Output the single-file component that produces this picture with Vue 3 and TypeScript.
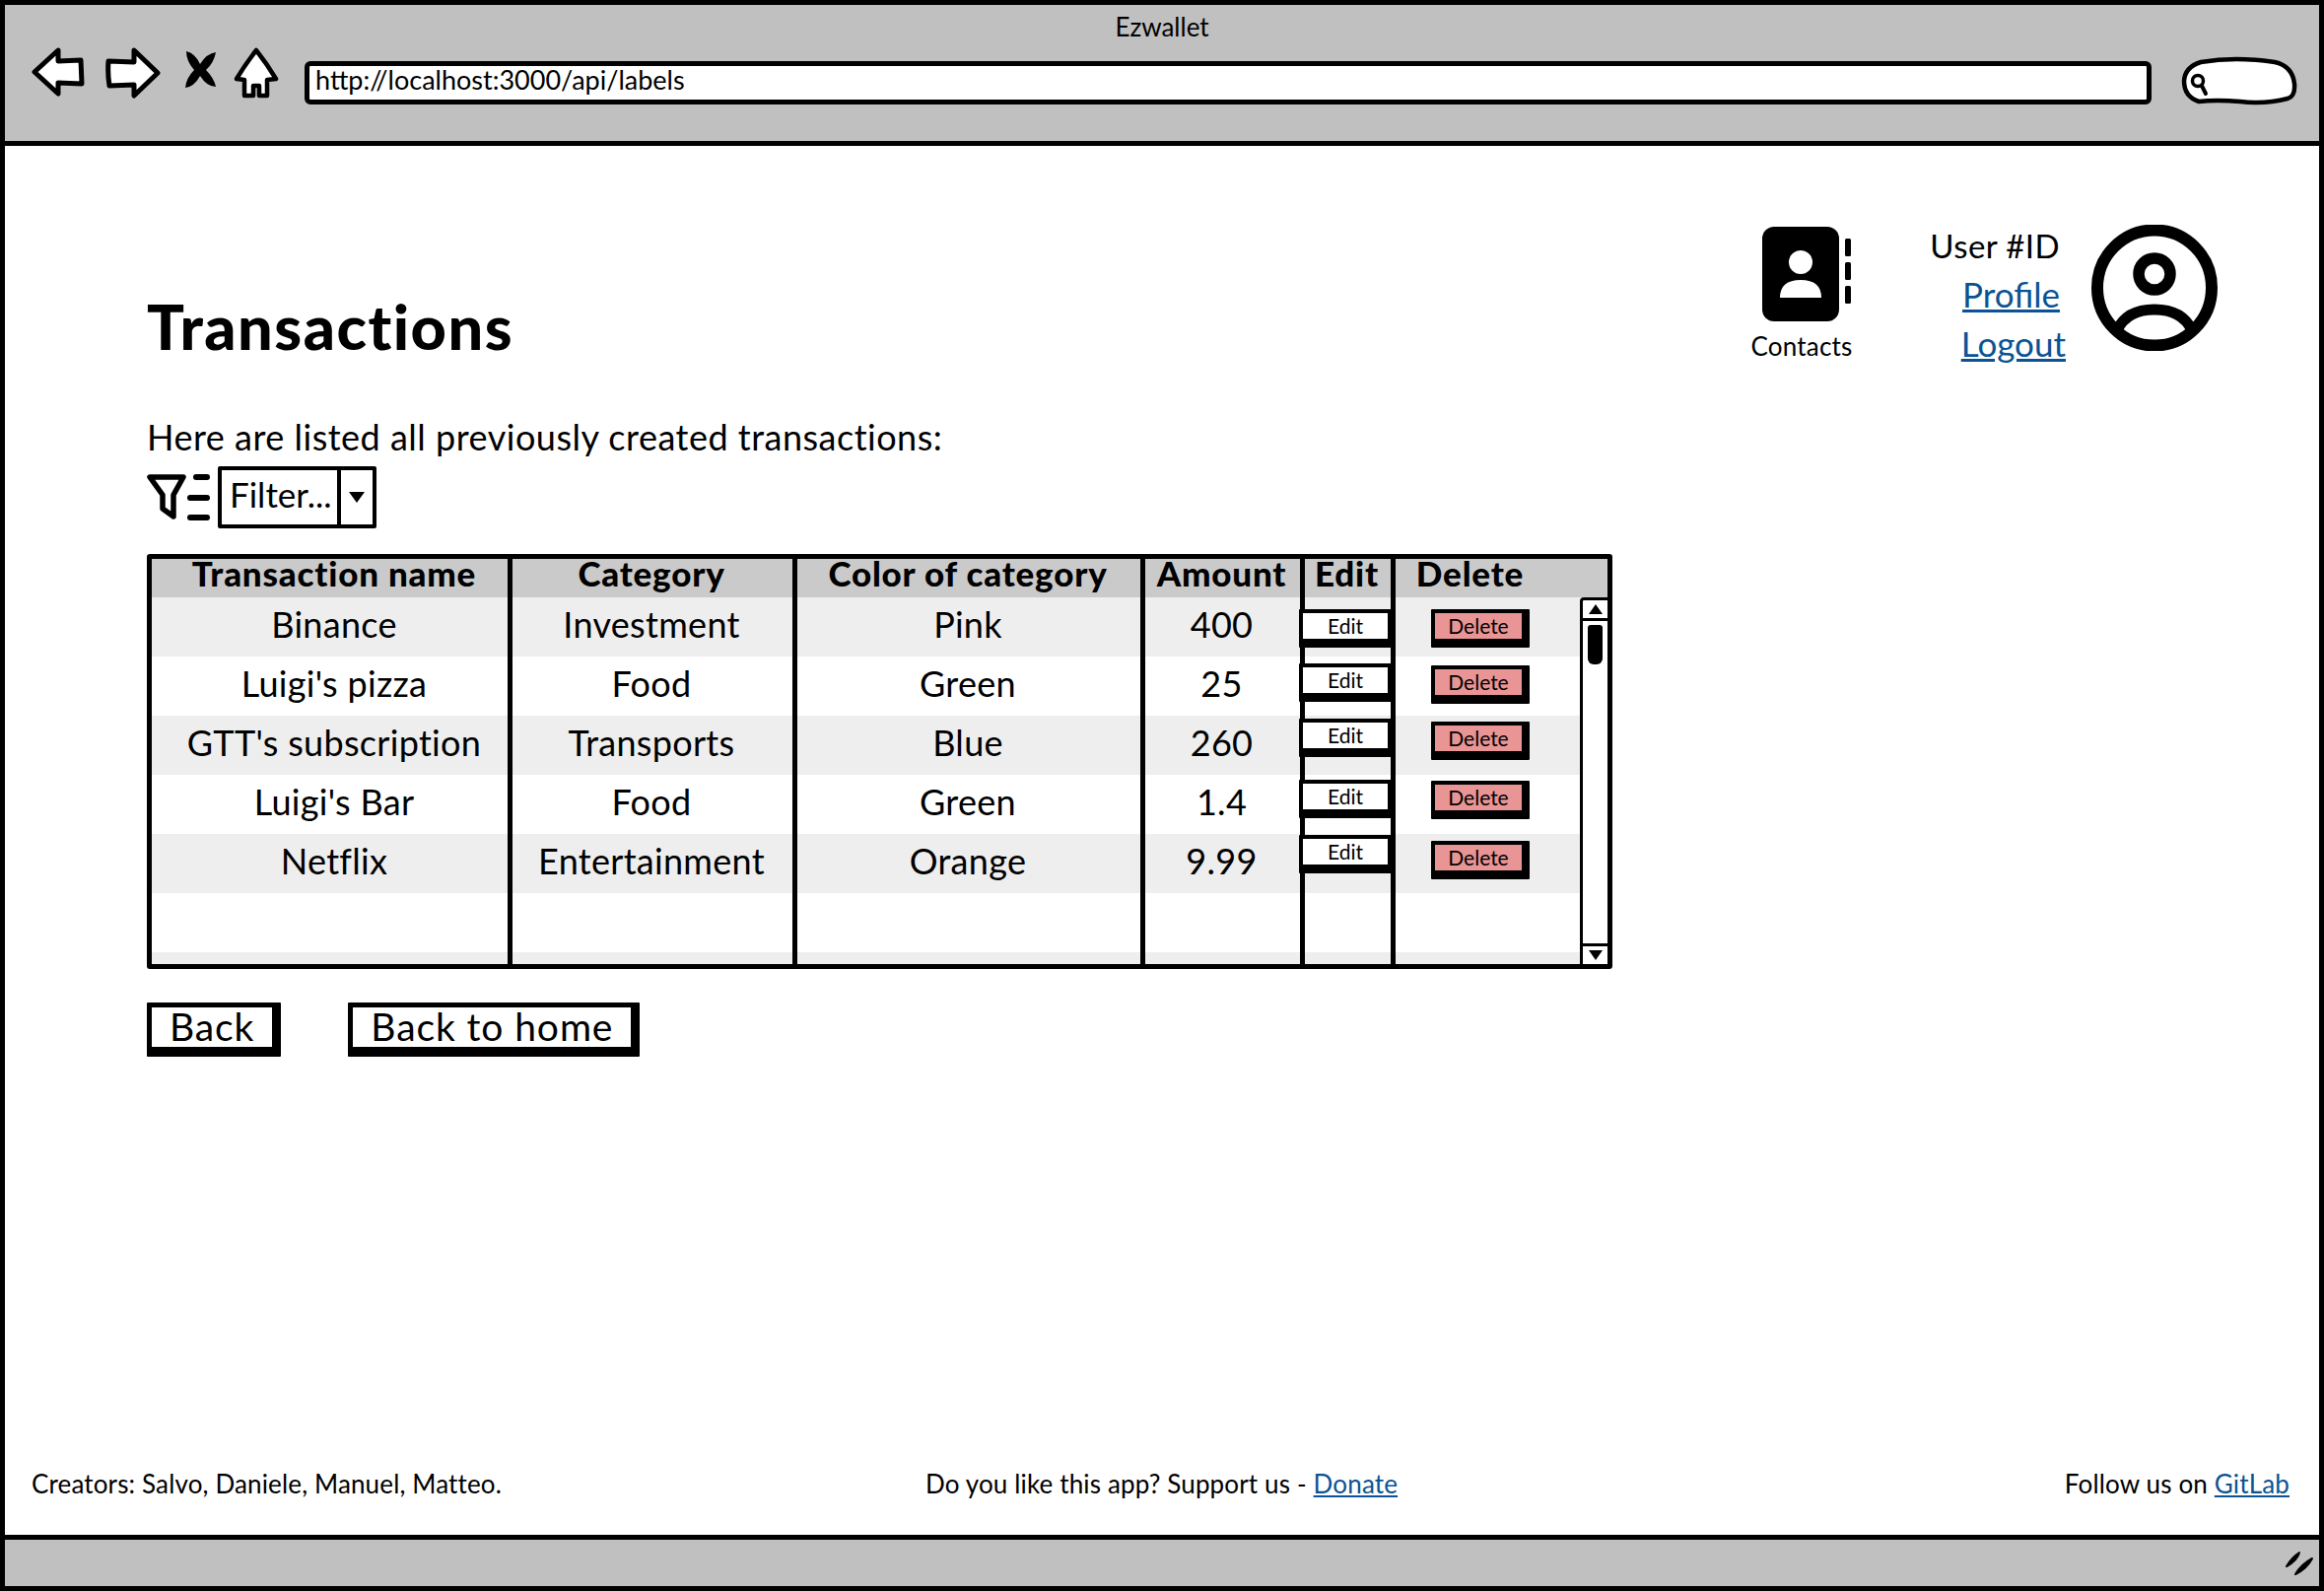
<template>
  <div class="window">
    <header class="topbar">
      <div class="window-title">Ezwallet</div>
      <div class="nav-row">
        <svg class="nav-icon back-icon" viewBox="0 0 55 50" width="55" height="50">
          <path d="M27 3 L3 25 L27 47 L27 36 L51 37 L50 13 L27 14 Z" fill="#fff" stroke="#000" stroke-width="5" stroke-linejoin="round" />
        </svg>
        <svg class="nav-icon forward-icon" viewBox="0 0 57 52" width="57" height="52">
          <path d="M30 3 L54 26 L30 49 L30 38 L5 39 Q3 26 4 14 L30 15 Z" fill="#fff" stroke="#000" stroke-width="5" stroke-linejoin="round" />
        </svg>
        <svg class="nav-icon stop-icon" viewBox="0 0 34 37" width="34" height="37">
          <path d="M3 0 Q12 2 17 13 Q24 2 33 1 Q31 12 23 19 Q31 27 33 36 Q24 36 17 25 Q11 36 2 37 Q3 27 11 19 Q3 10 3 0 Z" fill="#000" />
        </svg>
        <svg class="nav-icon home-icon" viewBox="0 0 46 52" width="46" height="52">
          <path d="M23 3 Q34 17 43 32 L34 33 L34 49 L26 49 L26 39 L20 39 L20 49 L11 49 L11 33 L3 32 Q12 17 23 3 Z" fill="#fff" stroke="#000" stroke-width="4.5" stroke-linejoin="round" />
        </svg>
        <div class="address-bar">http://localhost:3000/api/labels</div>
        <svg class="search-box" viewBox="0 0 119 50" width="119" height="50">
          <path d="M18 46 Q3 41 3 25 Q4 11 20 6 Q55 0 95 6 Q113 10 115 28 Q116 41 108 43 Q85 49 60 46 Q35 44 18 46 Z" fill="#fff" stroke="#000" stroke-width="4.5" />
          <circle cx="17" cy="25" r="5.5" fill="none" stroke="#000" stroke-width="3.5" />
          <path d="M21 30 L25 38" stroke="#000" stroke-width="4" stroke-linecap="round" />
        </svg>
      </div>
    </header>

    <main class="content">
      <div class="page-head">
        <h1 class="page-title">Transactions</h1>
        <div class="user-area">
          <div class="contacts">
            <svg viewBox="0 0 90 96" width="90" height="96">
              <rect x="0" y="0" width="78" height="96" rx="12" fill="#000" />
              <rect x="84" y="12" width="6" height="18" rx="1.5" fill="#000" />
              <rect x="84" y="36" width="6" height="18" rx="1.5" fill="#000" />
              <rect x="84" y="60" width="6" height="18" rx="1.5" fill="#000" />
              <ellipse cx="39" cy="36" rx="12" ry="12" fill="#fff" />
              <path d="M18 72 Q18 54 39 54 Q60 54 60 72 Z" fill="#fff" />
            </svg>
            <span class="contacts-label">Contacts</span>
          </div>
          <div class="user-links">
            <span class="user-id">User #ID</span>
            <a class="link user-link profile-link" href="#">Profile</a>
            <a class="link user-link" href="#">Logout</a>
          </div>
          <svg class="avatar" viewBox="0 0 128 128" width="128" height="128">
            <ellipse cx="64" cy="64" rx="58" ry="58.5" fill="#fff" stroke="#000" stroke-width="12" />
            <ellipse cx="64" cy="50" rx="16" ry="16" fill="none" stroke="#000" stroke-width="11.5" />
            <path d="M26 107 Q36 86 64 86 Q92 86 102 107" fill="none" stroke="#000" stroke-width="11" />
          </svg>
        </div>
      </div>

      <p class="intro">Here are listed all previously created transactions:</p>

      <div class="filter-row">
        <svg class="filter-icon" viewBox="0 0 65 48" width="65" height="48">
          <path d="M3 4 L37 4 L27 22 L27 44 L16 36 L16 22 Z" fill="#fff" stroke="#000" stroke-width="5.5" stroke-linejoin="round" />
          <path d="M50 4 L61 4 M44 25 L61 25 M44 45 L61 45" stroke="#000" stroke-width="6" stroke-linecap="round" />
        </svg>
        <div class="filter-select">
          <span class="filter-text">Filter...</span>
          <span class="filter-caret"><i class="caret"></i></span>
        </div>
      </div>

      <div class="grid-table">
        <div class="cell head" v-for="col in columns" :key="col">{{ col }}</div>
        <template v-for="(row, i) in rows" :key="row.name">
          <div class="cell" :class="{ shaded: i % 2 === 0 }">{{ row.name }}</div>
          <div class="cell" :class="{ shaded: i % 2 === 0 }">{{ row.category }}</div>
          <div class="cell" :class="{ shaded: i % 2 === 0 }">{{ row.color }}</div>
          <div class="cell" :class="{ shaded: i % 2 === 0 }">{{ row.amount }}</div>
          <div class="cell action" :class="{ shaded: i % 2 === 0 }">
            <button class="mini-btn edit-btn" :style="{ marginTop: row.editTop + 'px' }">Edit</button>
          </div>
          <div class="cell action last" :class="{ shaded: i % 2 === 0 }">
            <button class="mini-btn delete-btn" :style="{ marginTop: row.deleteTop + 'px' }">Delete</button>
          </div>
        </template>
        <div class="cell" v-for="n in 6" :key="'blank' + n"></div>
        <div class="cell shaded" v-for="n in 6" :key="'rest' + n"></div>

        <div class="scrollbar">
          <span class="scroll-btn"><i class="arrow up"></i></span>
          <span class="scroll-track"><i class="scroll-thumb"></i></span>
          <span class="scroll-btn down"><i class="arrow dn"></i></span>
        </div>
      </div>

      <div class="actions">
        <button class="big-btn">Back</button>
        <button class="big-btn">Back to home</button>
      </div>

      <footer class="page-foot">
        <span class="foot-left">Creators: Salvo, Daniele, Manuel, Matteo.</span>
        <span class="foot-center">Do you like this app? Support us - <a class="link" href="#">Donate</a></span>
        <span class="foot-right">Follow us on <a class="link" href="#">GitLab</a></span>
      </footer>
    </main>

    <div class="statusbar">
      <svg viewBox="0 0 30 26" width="30" height="26">
        <path d="M3 16 Q8 7 16 2 Q14 10 3 16 Z M12 24 Q18 14 29 8 Q24 18 12 24 Z" fill="#000" stroke="#000" stroke-width="2" stroke-linejoin="round" />
      </svg>
    </div>
  </div>
</template>

<script setup lang="ts">
interface Row {
  name: string;
  category: string;
  color: string;
  amount: string;
  editTop: number;
  deleteTop: number;
}

const columns = ["Transaction name", "Category", "Color of category", "Amount", "Edit", "Delete"];

// the buttons are not quite in line in the mockup, so each row keeps its own offset
const rows: Row[] = [
  { name: "Binance", category: "Investment", color: "Pink", amount: "400", editTop: 12, deleteTop: 12 },
  { name: "Luigi's pizza", category: "Food", color: "Green", amount: "25", editTop: 7, deleteTop: 9 },
  { name: "GTT's subscription", category: "Transports", color: "Blue", amount: "260", editTop: 3, deleteTop: 6 },
  { name: "Luigi's Bar", category: "Food", color: "Green", amount: "1.4", editTop: 5, deleteTop: 6 },
  { name: "Netflix", category: "Entertainment", color: "Orange", amount: "9.99", editTop: 1, deleteTop: 7 },
];
</script>

<style>
html,
body {
  margin: 0;
  background: #fff;
}
</style>

<style scoped>
.window {
  width: 2358px;
  height: 1614px;
  box-sizing: border-box;
  border: 5px solid #000;
  display: flex;
  flex-direction: column;
  overflow: hidden;
  font-family: Lato, "Open Sans", sans-serif;
  color: #000;
  background: #fff;
}

/* browser chrome */
.topbar {
  height: 143px;
  flex: none;
  box-sizing: border-box;
  background: #c0c0c0;
  border-bottom: 5px solid #000;
}
.window-title {
  text-align: center;
  font-size: 26px;
  line-height: 30px;
  padding-top: 7px;
}
.nav-row {
  display: flex;
  align-items: flex-start;
  margin-top: 6px;
  padding-left: 27px;
}
.back-icon {
  margin-right: 19px;
}
.forward-icon {
  margin-right: 23px;
}
.stop-icon {
  margin-top: 4px;
  margin-right: 17px;
}
.home-icon {
  margin-right: 26px;
}
.address-bar {
  width: 1874px;
  height: 44px;
  margin-top: 14px;
  box-sizing: border-box;
  background: #fff;
  border: 5px solid #000;
  border-radius: 6px;
  font-size: 27px;
  line-height: 27px;
  padding-left: 6px;
}
.search-box {
  margin-left: 30px;
  margin-top: 9px;
}

/* page */
.content {
  flex: 1;
  display: flex;
  flex-direction: column;
  padding-left: 144px;
  min-height: 0;
}
.page-head {
  height: 275px;
  flex: none;
  display: flex;
  justify-content: space-between;
  align-items: flex-start;
}
.page-title {
  margin: 147px 0 0;
  font-size: 63px;
  line-height: 72px;
  font-weight: 900;
  letter-spacing: 1.5px;
}
.user-area {
  display: flex;
  align-items: flex-start;
  margin-top: 80px;
  margin-right: 103px;
}
.contacts {
  width: 110px;
  display: flex;
  flex-direction: column;
  align-items: center;
  padding-top: 2px;
  margin-right: 68px;
}
.contacts-label {
  font-size: 26px;
  line-height: 30px;
  letter-spacing: 0.2px;
  margin-top: 10px;
  margin-left: -10px;
  white-space: nowrap;
}
.user-links {
  display: flex;
  flex-direction: column;
  align-items: flex-end;
  width: 140px;
  margin-right: 26px;
  padding-top: 1px;
}
.user-id {
  font-size: 33px;
  line-height: 40px;
  letter-spacing: 0.4px;
  margin-right: 6px;
}
.user-link {
  font-size: 35px;
  line-height: 50px;
}
.profile-link {
  margin-right: 6px;
  margin-top: 4px;
}
.link {
  color: #0b5394;
  text-decoration: underline;
}
.avatar {
  flex: none;
}
.intro {
  margin: 0;
  font-size: 36px;
  line-height: 40px;
  letter-spacing: 0.5px;
}
.filter-row {
  display: flex;
  align-items: flex-start;
  margin-top: 10px;
}
.filter-icon {
  margin-top: 7px;
  margin-right: 7px;
}
.filter-select {
  width: 161px;
  height: 63px;
  box-sizing: border-box;
  background: #fff;
  border: 4px solid #000;
  border-radius: 2px;
  display: flex;
}
.filter-text {
  width: 121px;
  box-sizing: border-box;
  padding-left: 8px;
  font-size: 35px;
  line-height: 48px;
  border-right: 4px solid #000;
}
.filter-caret {
  flex: 1;
  display: flex;
  align-items: center;
  justify-content: center;
}
.caret {
  border-left: 8px solid transparent;
  border-right: 8px solid transparent;
  border-top: 11px solid #000;
}

/* table */
.grid-table {
  position: relative;
  width: 1487px;
  margin-top: 26px;
  box-sizing: border-box;
  border: 5px solid #000;
  border-radius: 3px;
  display: grid;
  grid-template-columns: 366px 289px 353px 162px 92px 215px;
  grid-template-rows: 39px repeat(6, 60px) 12px;
  background: #fff;
}
.cell {
  box-sizing: border-box;
  border-right: 5px solid #000;
  display: flex;
  justify-content: center;
  align-items: center;
  padding-bottom: 6px;
  padding-right: 2px;
  font-size: 36px;
  letter-spacing: 0.3px;
  white-space: nowrap;
  min-width: 0;
}
.cell:nth-child(6n) {
  border-right: none;
}
.cell:nth-child(6n + 1) {
  padding-left: 9px;
  padding-right: 0;
}
.cell.shaded {
  background: #eeeeee;
}
.cell.head {
  background: #cacaca;
  font-weight: 900;
  font-size: 35px;
  letter-spacing: 0.8px;
  padding-bottom: 12px;
}
.cell.head:nth-child(6) {
  padding-right: 64px;
}
.cell.action {
  align-items: flex-start;
  justify-content: flex-start;
  padding: 0;
}
.cell.action.last {
  padding-left: 36px;
}
.mini-btn {
  flex: none;
  height: 39px;
  padding: 0;
  box-sizing: border-box;
  border-style: solid;
  border-color: #000;
  border-width: 4px 8px 9px 4px;
  border-radius: 1px;
  font-family: inherit;
  font-size: 21px;
  line-height: 24px;
  color: #000;
  position: relative;
  z-index: 1;
}
.edit-btn {
  width: 98px;
  margin-left: -6px;
  background: #fff;
}
.delete-btn {
  width: 100px;
  background: #e99595;
}

/* scrollbar sits over the last column */
.scrollbar {
  position: absolute;
  top: 39px;
  right: 0;
  bottom: 0;
  width: 28px;
  box-sizing: border-box;
  background: #fff;
  border-left: 3px solid #000;
  border-top: 3px solid #000;
  border-radius: 4px 0 0 0;
  display: flex;
  flex-direction: column;
  z-index: 2;
}
.scroll-btn {
  height: 18px;
  display: flex;
  align-items: center;
  justify-content: center;
  border-bottom: 3px solid #000;
  flex: none;
}
.scroll-btn.down {
  border-bottom: none;
  border-top: 3px solid #000;
}
.scroll-track {
  flex: 1;
  display: flex;
  justify-content: center;
  align-items: flex-start;
  padding-top: 4px;
}
.scroll-thumb {
  width: 15px;
  height: 40px;
  background: #000;
  border-radius: 3px 3px 6px 6px;
}
.arrow {
  border-left: 7px solid transparent;
  border-right: 7px solid transparent;
}
.arrow.up {
  border-bottom: 10px solid #000;
}
.arrow.dn {
  border-top: 10px solid #000;
}

.actions {
  display: flex;
  gap: 68px;
  margin-top: 34px;
}
.big-btn {
  height: 55px;
  box-sizing: border-box;
  background: #fff;
  border-style: solid;
  border-color: #000;
  border-width: 5px 9px 10px 5px;
  border-radius: 1px;
  padding: 0 18px 2px;
  font-family: inherit;
  font-size: 39px;
  letter-spacing: 0.9px;
  line-height: 36px;
  color: #000;
}

.page-foot {
  margin-top: auto;
  margin-left: -144px;
  padding: 0 30px 34px 27px;
  display: grid;
  grid-template-columns: 1fr auto 1fr;
  font-size: 26px;
  letter-spacing: 0.15px;
  line-height: 36px;
}
.foot-center {
  margin-left: 2px;
}
.foot-right {
  text-align: right;
}

.statusbar {
  height: 52px;
  flex: none;
  box-sizing: border-box;
  background: #c0c0c0;
  border-top: 5px solid #000;
  display: flex;
  justify-content: flex-end;
  align-items: center;
  padding-right: 6px;
}
</style>
